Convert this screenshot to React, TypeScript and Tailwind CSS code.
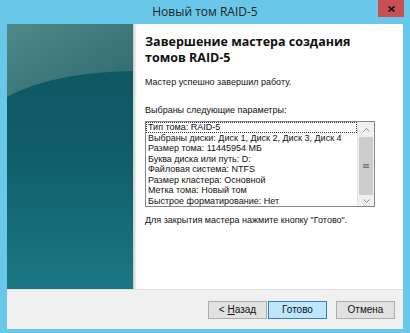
const items = [
  "Тип тома: RAID-5",
  "Выбраны диски: Диск 1, Диск 2, Диск 3, Диск 4",
  "Размер тома: 11445954 МБ",
  "Буква диска или путь: D:",
  "Файловая система: NTFS",
  "Размер кластера: Основной",
  "Метка тома: Новый том",
  "Быстрое форматирование: Нет",
]

function SidePanel() {
  return (
    <div className="relative w-[126px] h-full overflow-hidden bg-gradient-to-b from-[#0d5460] via-[#105e6a] to-[#1b7784]">
      <svg className="absolute inset-0" width="126" height="265" viewBox="0 0 126 265">
        <defs>
          <linearGradient id="top" x1="0" y1="0" x2="1" y2="1">
            <stop offset="0" stopColor="#4f8a89" />
            <stop offset="1" stopColor="#2b686e" />
          </linearGradient>
        </defs>
        <path d="M0,73 C30,57 70,48 126,47 L126,0 L0,0 Z" fill="url(#top)" />
      </svg>
    </div>
  )
}

function Scrollbar() {
  return (
    <div className="w-[17px] h-full flex flex-col bg-[#f0f0f0] border-l border-[#e6e6e6]">
      <div className="h-[15px] flex items-center justify-center">
        <svg width="7" height="4" viewBox="0 0 7 4">
          <path d="M0.5,3.5 L3.5,0.5 L6.5,3.5" fill="none" stroke="#8a8a8a" strokeWidth="1" />
        </svg>
      </div>
      <div className="flex-1 mx-[1px] bg-[#cdcdcd] flex items-center justify-center">
        <svg width="6" height="6" viewBox="0 0 6 6">
          <path d="M0,1.5 H6 M0,3 H6 M0,4.5 H6" stroke="#7a7a7a" strokeWidth="1" />
        </svg>
      </div>
      <div className="h-[11px] flex items-center justify-center">
        <svg width="7" height="4" viewBox="0 0 7 4">
          <path d="M0.5,0.5 L3.5,3.5 L6.5,0.5" fill="none" stroke="#8a8a8a" strokeWidth="1" />
        </svg>
      </div>
    </div>
  )
}

function Btn({ children, primary }: { children: React.ReactNode; primary?: boolean }) {
  return (
    <button
      className={
        "w-[59px] h-[18px] text-[10px] text-[#111] border " +
        (primary ? "bg-[#bee6fd] border-[#3c7fb1]" : "bg-[#e1e1e1] border-[#adadad]")
      }
    >
      {children}
    </button>
  )
}

export default function App() {
  return (
    <div className="w-[410px] h-[333px] bg-[#69c8e9] flex flex-col font-['Liberation_Sans',sans-serif] text-[#111]">
      <div className="relative h-[24px] shrink-0 flex items-center justify-center">
        <span className="font-['Open_Sans',sans-serif] text-[12px] text-[#1e1e1e]">Новый том RAID-5</span>
        <div className="absolute right-[6px] top-0 w-[26px] h-[17px] bg-[#c75050] flex items-center justify-center">
          <svg width="7" height="6" viewBox="0 0 7 6">
            <path d="M0.5,0.5 L6.5,5.5 M6.5,0.5 L0.5,5.5" stroke="#111" strokeWidth="1.6" />
          </svg>
        </div>
      </div>

      <div className="flex-1 mx-[7px] mb-[4px] flex flex-col bg-[#f0f0f0]">
        <div className="flex h-[265px] shrink-0 bg-white">
          <SidePanel />
          <div className="w-[4px] bg-gradient-to-r from-[#c9c9c9] to-white" />
          <div className="flex-1 pl-[8px] pt-[10px] flex flex-col">
            <h1 className="font-['Open_Sans',sans-serif] font-bold text-[12.5px] leading-[16px] text-[#111]">
              <span className="block">Завершение мастера создания</span>
              <span className="block">томов RAID-5</span>
            </h1>
            <p className="mt-[10px] text-[9px] leading-[12px]">Мастер успешно завершил работу.</p>
            <p className="mt-[16px] text-[9px] leading-[12px]">Выбраны следующие параметры:</p>
            <div className="mt-[5px] w-[230px] h-[86px] border border-[#828790] flex bg-white">
              <div className="flex-1 text-[9px] leading-[10.5px]">
                {items.map((t, i) => (
                  <div
                    key={i}
                    className={
                      "pl-[2px] h-[10.5px] whitespace-nowrap " +
                      (i === 0 ? "outline outline-1 outline-dotted outline-[#333] -outline-offset-1" : "")
                    }
                  >
                    {t}
                  </div>
                ))}
              </div>
              <Scrollbar />
            </div>
            <p className="mt-[7px] text-[9px] leading-[12px]">Для закрытия мастера нажмите кнопку "Готово".</p>
          </div>
        </div>
        <div className="flex-1 border-t border-[#dfdfdf] flex items-center justify-end pr-[8px]">
          <Btn>
            &lt; <span className="underline">Н</span>азад
          </Btn>
          <div className="w-[1px]" />
          <Btn primary>Готово</Btn>
          <div className="w-[9px]" />
          <Btn>Отмена</Btn>
        </div>
      </div>
    </div>
  )
}
